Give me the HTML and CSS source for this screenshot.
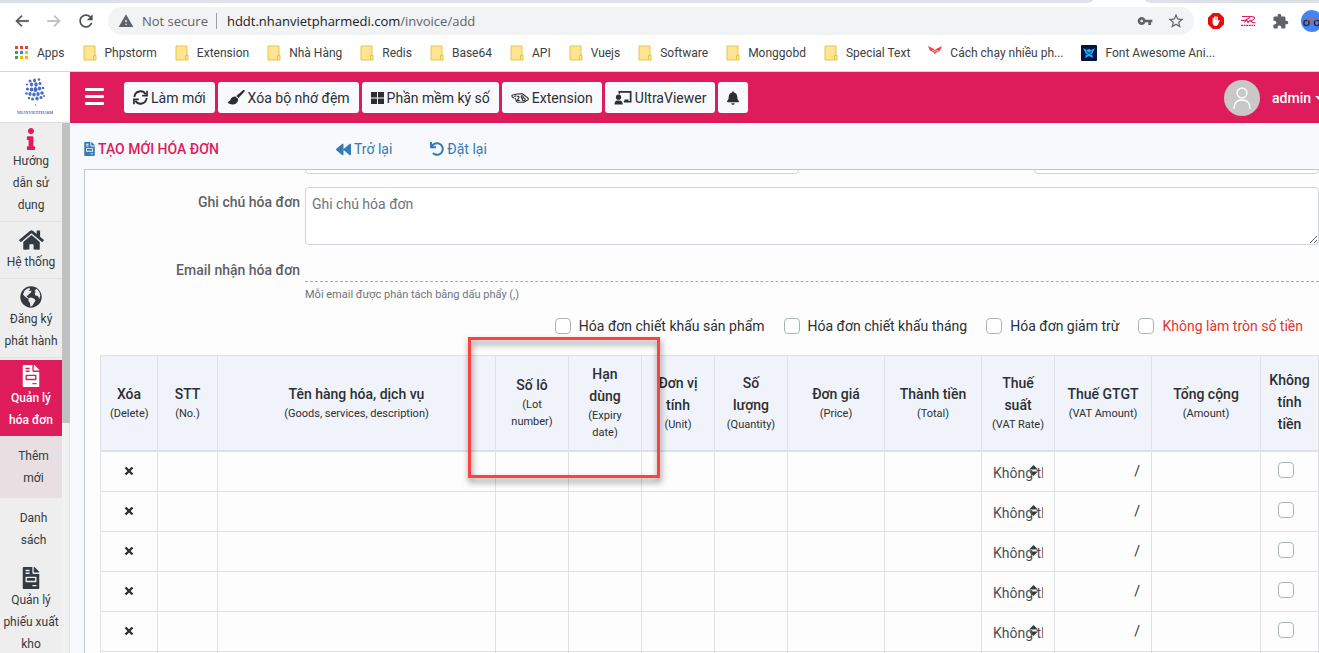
FILE: index.html
```html
<!DOCTYPE html>
<html lang="vi">
<head>
<meta charset="utf-8">
<title>Tạo mới hóa đơn</title>
<link rel="stylesheet" href="styles.css">
</head>
<body>
<svg class="sprite" aria-hidden="true">
  <symbol id="i-back" viewBox="0 0 24 24"><path d="M22 11H6.200l6.200-6.200L11 3.400 2.400 12 11 20.600l1.400-1.400L6.200 13H22z" stroke="currentColor" stroke-width=".6"/></symbol>
  <symbol id="i-folder" viewBox="0 0 14 16"><path d="M1 1h11v9h1v5H1z" fill="#ffe591" stroke="#e8c34a" stroke-width="1"/><path d="M10.500 14.500v-4h2" fill="none" stroke="#e8c34a"/></symbol>
  <symbol id="i-invoice" viewBox="0 0 384 512"><path d="M288 256H96v64h192v-64zm89-151L279.100 7c-4.500-4.500-10.600-7-17-7H256v128h128v-6.100c0-6.300-2.500-12.400-7-16.900zm-153 31V0H24C10.700 0 0 10.700 0 24v464c0 13.300 10.700 24 24 24h336c13.300 0 24-10.700 24-24V160H248c-13.200 0-24-10.800-24-24zM64 72c0-4.420 3.580-8 8-8h80c4.420 0 8 3.580 8 8v16c0 4.420-3.580 8-8 8H72c-4.420 0-8-3.580-8-8V72zm0 64c0-4.420 3.580-8 8-8h80c4.420 0 8 3.580 8 8v16c0 4.420-3.580 8-8 8H72c-4.420 0-8-3.580-8-8v-16zm256 304c0 4.420-3.580 8-8 8h-80c-4.420 0-8-3.580-8-8v-16c0-4.420 3.580-8 8-8h80c4.420 0 8 3.580 8 8v16zm0-200v96c0 8.840-7.160 16-16 16H80c-8.840 0-16-7.160-16-16v-96c0-8.840 7.160-16 16-16h224c8.840 0 16 7.160 16 16z"/></symbol>
  <symbol id="i-times" viewBox="0 0 10 10"><path d="M1.500 1.500l7 7M8.500 1.500l-7 7" stroke="currentColor" stroke-width="2.400"/></symbol>
</svg>

<div class="browser">
  <div class="tabstrip"><span class="tabs-left"></span><span class="tabs-right"></span></div>
  <div class="toolbar">
    <button class="nav-btn" aria-label="Back"><svg width="16" height="18"><use href="#i-back"/></svg></button>
    <button class="nav-btn nav-btn-off nav-btn-forward" aria-label="Forward"><svg width="16" height="18"><use href="#i-back"/></svg></button>
    <button class="nav-btn" aria-label="Reload"><svg width="20" height="20" viewBox="0 0 24 24"><path d="M17.650 6.350C16.200 4.900 14.210 4 12 4c-4.420 0-7.990 3.580-7.990 8s3.570 8 7.990 8c3.730 0 6.840-2.550 7.730-6h-2.080c-.82 2.330-3.040 4-5.650 4-3.310 0-6-2.690-6-6s2.690-6 6-6c1.660 0 3.140.69 4.220 1.780L13 11h7V4l-2.350 2.350z"/></svg></button>
    <div class="omnibox">
      <svg width="16" height="16" viewBox="0 0 24 24"><path d="M1 21h22L12 2 1 21zm12-3h-2v-2h2v2zm0-4h-2v-4h2v4z"/></svg>
      <span class="secure">Not secure</span>
      <span class="url"><b>hddt.nhanvietpharmedi.com</b>/invoice/add</span>
      <svg width="16" height="16" viewBox="0 0 24 24"><path d="M12.650 10C11.830 7.670 9.610 6 7 6c-3.310 0-6 2.690-6 6s2.690 6 6 6c2.610 0 4.830-1.670 5.650-4H17v4h4v-4h2v-4H12.650zM7 14c-1.100 0-2-.9-2-2s.9-2 2-2 2 .9 2 2-.9 2-2 2z"/></svg>
      <svg width="18" height="18" viewBox="0 0 24 24"><path d="M22 9.240l-7.190-.62L12 2 9.190 8.630 2 9.240l5.460 4.730L5.820 21 12 17.270 18.180 21l-1.630-7.030L22 9.240zM12 15.400l-3.760 2.270 1-4.280-3.320-2.880 4.380-.38L12 6.100l1.710 4.040 4.380.38-3.320 2.880 1 4.280L12 15.400z"/></svg>
    </div>
    <div class="extensions">
      <svg width="16" height="16" viewBox="0 0 16 16"><path d="M4.800 0h6.400L16 4.800v6.400L11.200 16H4.800L0 11.200V4.800z" fill="#e40d0d"/><path d="M4.600 8.400V5.200q.5-.8 1 0v2h.3V4q.6-.8 1.100 0v3h.3V3.400q.6-.8 1.100 0V7h.3V4q.6-.8 1.100 0v4.200l1-1.200q1-.4.900.5l-1.700 3.900Q9 13 7.300 12.900 4.600 12.600 4.600 9.500z" fill="#fff"/></svg>
      <svg width="16" height="16" viewBox="0 0 16 16" fill="none" stroke="#d81e5b"><path d="M2 3.500h9q4 0 3.500 1.800T8 8.500M1 7.500h4L10 4.500M4.500 9.500l2-3L8 9.500l2-2 3 2.300h2.500" stroke-width="1.100"/><path d="M1 12.300h14" stroke-width="1.200" stroke-dasharray="2 .6"/></svg>
      <svg width="17" height="17" viewBox="0 0 24 24"><path d="M20.500 11H19V7c0-1.100-.9-2-2-2h-4V3.500C13 2.120 11.880 1 10.500 1S8 2.120 8 3.500V5H4c-1.100 0-1.990.9-1.990 2v3.800H3.500c1.490 0 2.700 1.210 2.700 2.700s-1.210 2.700-2.700 2.700H2V20c0 1.100.9 2 2 2h3.800v-1.500c0-1.490 1.210-2.700 2.700-2.700 1.490 0 2.700 1.210 2.700 2.700V22H17c1.100 0 2-.9 2-2v-4h1.500c1.380 0 2.500-1.120 2.500-2.500S21.880 11 20.500 11z"/></svg>
      <svg width="22" height="22" viewBox="0 0 22 22"><circle cx="11" cy="11" r="11" fill="#4285f4"/><g fill="none" stroke="#202a44" stroke-width="1.400"><circle cx="5.500" cy="13" r="2.600"/><circle cx="16" cy="13" r="2.600"/></g><path d="M5.500 13l2.500-5h6l2 5M8.500 8.500l2 4.500 3.500-4.500M6.500 7.500h2.500" fill="none" stroke="#e0553c"/></svg>
    </div>
  </div>
  <nav class="bookmarks">
    <a href="#"><svg width="14" height="14" viewBox="0 0 14 14"><g fill="#ea4335"><path d="M0 0h3v3H0zM5 0h3v3H5zM10 0h3v3h-3z"/></g><path d="M0 5h3v3H0zM0 10h3v3H0z" fill="#34a853"/><path d="M5 5h3v3H5z" fill="#1a8cff"/><path d="M10 5h3v3h-3zM5 10h3v3H5zM10 10h3v3h-3z" fill="#fbb400"/></svg>Apps</a>
    <a href="#"><svg width="14" height="16"><use href="#i-folder"/></svg>Phpstorm</a>
    <a href="#"><svg width="14" height="16"><use href="#i-folder"/></svg>Extension</a>
    <a href="#"><svg width="14" height="16"><use href="#i-folder"/></svg>Nhà Hàng</a>
    <a href="#"><svg width="14" height="16"><use href="#i-folder"/></svg>Redis</a>
    <a href="#"><svg width="14" height="16"><use href="#i-folder"/></svg>Base64</a>
    <a href="#"><svg width="14" height="16"><use href="#i-folder"/></svg>API</a>
    <a href="#"><svg width="14" height="16"><use href="#i-folder"/></svg>Vuejs</a>
    <a href="#"><svg width="14" height="16"><use href="#i-folder"/></svg>Software</a>
    <a href="#"><svg width="14" height="16"><use href="#i-folder"/></svg>Monggobd</a>
    <a href="#"><svg width="14" height="16"><use href="#i-folder"/></svg>Special Text</a>
    <a href="#"><svg width="14" height="16" viewBox="0 0 14 16"><path d="M0 1l5 2.500L7 5l2-1.500L14 1l-2 4.500L9 7 7 9 5 7 2 5.500z" fill="#ee3b3b"/><path d="M4 5l3 1.500L10 5" fill="none" stroke="#fff" stroke-width=".7"/></svg>Cách chạy nhiều ph...</a>
    <a href="#"><svg width="16" height="16" viewBox="0 0 16 16"><rect width="16" height="16" rx="1" fill="#041440"/><path d="M2 3l4 2q2-2 4 0l4-2-2 4-1 2 1 4-4-2-4 2 1-4-1-2z" fill="#20aef5"/><path d="M5 6l6 4M11 6l-6 4" stroke="#0b4fa5"/></svg>Font Awesome Ani...</a>
  </nav>
</div>

<div class="app">
  <aside class="sidebar">
    <a class="logo" href="#" aria-label="Nhan Viet Pharmedi">
      <svg width="36" height="38" viewBox="0 0 36 38"><circle cx="13" cy="4" r="1.500"/><ellipse cx="17.500" cy="3.500" rx="1.500" ry="2"/><circle cx="22" cy="2.500" r="1.300"/><circle cx="10" cy="7.500" r="1.100"/><ellipse cx="14.500" cy="7.500" rx="1.700" ry="2"/><ellipse cx="19" cy="7.500" rx="1.700" ry="2.200"/><circle cx="23" cy="6.500" r="1.600"/><circle cx="10.500" cy="12" r="1.600"/><ellipse cx="14.500" cy="12.500" rx="1.800" ry="2"/><ellipse cx="18.500" cy="12.500" rx="2" ry="2.500"/><ellipse cx="22.500" cy="11.500" rx="1.700" ry="2"/><circle cx="26" cy="11" r="1.300"/><circle cx="9.500" cy="16.500" r="1.300"/><ellipse cx="13" cy="17" rx="1.600" ry="2"/><ellipse cx="17" cy="17.500" rx="1.700" ry="2"/><ellipse cx="21" cy="17" rx="1.700" ry="2"/><circle cx="25" cy="16" r="1.800"/><circle cx="12" cy="21" r="1.200"/><circle cx="15.500" cy="22" r="1.500"/><ellipse cx="20" cy="21.500" rx="1.600" ry="1.900"/><circle cx="24" cy="20.500" r="1.600"/><circle cx="27" cy="19" r="1"/><circle cx="18.500" cy="28" r=".7"/><text x="18" y="37" text-anchor="middle" class="logo-text">NHANVIETPHARM</text></svg>
    </a>
    <div class="side-scroll">
      <nav class="menu">
        <a class="item item-first" href="#"><svg class="pink" width="10" height="22" viewBox="0 0 192 512"><path d="M20 424.229h20V279.771H20c-11.046 0-20-8.954-20-20V212c0-11.046 8.954-20 20-20h112c11.046 0 20 8.954 20 20v212.229h20c11.046 0 20 8.954 20 20V492c0 11.046-8.954 20-20 20H20c-11.046 0-20-8.954-20-20v-47.771c0-11.046 8.954-20 20-20zM96 0C56.235 0 24 32.235 24 72s32.235 72 72 72 72-32.235 72-72S135.764 0 96 0z"/></svg><span>Hướng dẫn sử dụng</span></a>
        <a class="item" href="#"><svg width="25" height="22" viewBox="0 0 576 512"><path d="M280.370 148.260L96 300.110V464a16 16 0 0 0 16 16l112.060-.29a16 16 0 0 0 15.920-16V368a16 16 0 0 1 16-16h64a16 16 0 0 1 16 16v95.640a16 16 0 0 0 16 16.050L464 480a16 16 0 0 0 16-16V300L295.670 148.260a12.190 12.190 0 0 0-15.300 0zM571.600 251.470L488 182.560V44.050a12 12 0 0 0-12-12h-56a12 12 0 0 0-12 12v72.610L318.470 43a48 48 0 0 0-61 0L4.340 251.470a12 12 0 0 0-1.600 16.900l25.500 31A12 12 0 0 0 45.150 301l235.220-193.740a12.190 12.190 0 0 1 15.300 0L530.900 301a12 12 0 0 0 16.900-1.600l25.500-31a12 12 0 0 0-1.700-16.930z"/></svg><span>Hệ thống</span></a>
        <a class="item" href="#"><svg width="22" height="22" viewBox="0 0 22 22"><circle cx="11" cy="11" r="10.700"/><path d="M4.500 4.700Q7 2 9.500 2l.5 1.500-1.500 1 1.500.5 1.500-.5-.5 2-2 1.500-1 1.500-1.500.2.500 1.300 1.500 1-1 .5-2-1.500L3 8.500zM8.500 12l3-.5 3 1.500 1 1.500-1.500 2.500-2 3.200-1.500.3-.5-3.500-1.500-2zM14.500 5l2-2.200q3.500 2.500 3.800 7l-1 3.200-1.300-3-2.500-.5L14.500 7l1.500-1z" fill="#eee"/></svg><span>Đăng ký phát hành</span></a>
        <a class="item item-active" href="#"><svg width="18" height="22"><use href="#i-invoice"/></svg><span>Quản lý hóa đơn</span></a>
        <a class="sub sub-active" href="#">Thêm mới</a>
        <a class="sub" href="#">Danh sách</a>
        <a class="item" href="#"><svg width="18" height="22"><use href="#i-invoice"/></svg><span>Quản lý phiếu xuất kho</span></a>
      </nav>
      <div class="scrollbar"><div class="thumb"></div></div>
    </div>
  </aside>

  <main class="main">
    <header class="topbar">
      <button class="burger" aria-label="Menu"><i></i><i></i><i></i></button>
      <div class="actions">
        <button class="btn"><svg width="15" height="15" viewBox="0 0 16 16" fill="none" stroke="currentColor" stroke-width="2"><path d="M1.500 7.500A6.500 6.500 0 0 1 13.500 4.500M14.500 8.500A6.500 6.500 0 0 1 2.500 11.500"/><path d="M15 .8V6H9.800M1 15.200V10h5.200" stroke-width="1.800"/></svg>Làm mới</button>
        <button class="btn"><svg width="18" height="15" viewBox="0 0 18 15"><path d="M17.500.3q.6.600 0 1.200L11.500 8 9.300 6 16 .2q.8-.5 1.500.1zM8.500 6.500l2.600 2.400q.2 4-3.600 5.300Q4 15.500.5 12.800q1-.3 1.500-1L.8 11.500 3 10.800Q4 6.500 8.500 6.500z"/></svg>Xóa bộ nhớ đệm</button>
        <button class="btn"><svg width="13" height="12" viewBox="0 0 13 12"><path d="M0 0h6v5.500H0zM7 0h6v5.500H7zM0 6.500h6V12H0zM7 6.500h6V12H7z"/></svg>Phần mềm ký số</button>
        <button class="btn"><svg width="18" height="12" viewBox="0 0 18 12" fill="none" stroke="currentColor" stroke-width="1.100"><path d="M.8 3.200L6 2l5.500-.3 5.700 4.600v1.400L13 10.300H6.500L5 9M.8 3.200l.5 2L3 6"/><path d="M3 4.500l2.500-.7M4 6l1.500 3M6 4.500q2-.8 2 .6L6.500 8.500h2.300M10 4l2 5M10 4q3-.8 2 2 2.500-.5 2 2.500l-2 .5"/></svg>Extension</button>
        <button class="btn"><svg width="18" height="14" viewBox="0 0 17 14"><circle cx="4" cy="6.200" r="2.600"/><path d="M0 13.500q0-3.800 3-4h2q3 .2 3.300 4zM4 0h13v11.500H9.500L9 10h1V8.500h4V10h1.300V1.700H5.500V3L4 2.500z"/></svg>UltraViewer</button>
        <button class="btn" aria-label="Thông báo"><svg width="12" height="14" viewBox="0 0 448 512"><path d="M224 512c35.320 0 63.970-28.650 63.970-64H160.030c0 35.350 28.650 64 63.970 64zm215.390-149.710c-19.320-20.760-55.470-51.990-55.470-154.290 0-77.700-54.480-139.900-127.940-155.160V32c0-17.670-14.320-32-31.980-32s-31.980 14.330-31.980 32v20.840C118.560 68.100 64.080 130.300 64.080 208c0 102.300-36.150 133.530-55.470 154.290-6 6.450-8.660 14.160-8.610 21.710.11 16.400 12.980 32 32.100 32h383.800c19.120 0 32-15.600 32.100-32 .05-7.550-2.610-15.270-8.610-21.710z"/></svg></button>
      </div>
      <a class="user" href="#"><svg width="36" height="36" viewBox="0 0 36 36" fill="none" stroke="#fff" stroke-width="1.300"><circle cx="18" cy="18" r="18" fill="#c8c8c8" stroke="none"/><circle cx="18" cy="13" r="5"/><path d="M10 29q0-9 8-9t8 9"/></svg><span>admin</span><i class="caret"></i></a>
    </header>

    <div class="titlebar">
      <h1><svg width="11" height="14"><use href="#i-invoice"/></svg>TẠO MỚI HÓA ĐƠN</h1>
      <a href="#"><svg width="15" height="15" viewBox="0 0 512 512"><path d="M11.500 280.600l192 160c20.600 17.200 52.500 2.800 52.500-24.600V96c0-27.400-31.900-41.800-52.500-24.600l-192 160c-15.300 12.800-15.300 36.400 0 49.200zm256 0l192 160c20.600 17.200 52.500 2.800 52.500-24.600V96c0-27.400-31.900-41.800-52.500-24.600l-192 160c-15.300 12.800-15.300 36.400 0 49.200z"/></svg>Trở lại</a>
      <a href="#"><svg width="14" height="14" viewBox="0 0 512 512"><path d="M212.333 224.333H12c-6.627 0-12-5.373-12-12V12C0 5.373 5.373 0 12 0h48c6.627 0 12 5.373 12 12v78.112C117.773 39.279 184.260 7.470 258.175 8.007c136.906.994 246.448 111.623 246.157 248.532C504.041 393.258 393.120 504 256.333 504c-64.089 0-122.496-24.313-166.510-64.215-5.099-4.622-5.334-12.554-.467-17.420l33.967-33.967c4.474-4.474 11.662-4.717 16.401-.525C170.760 415.336 211.580 432 256.333 432c97.268 0 176-78.716 176-176 0-97.267-78.716-176-176-176-58.496 0-110.280 28.476-142.274 72.333h98.274c6.627 0 12 5.373 12 12v48c0 6.627-5.373 12-12 12z"/></svg>Đặt lại</a>
    </div>

    <section class="content">
      <form class="form">
        <div class="cut-row"><input class="cut" type="text" aria-label="Địa chỉ"><input class="cut" type="text" aria-label="Hình thức"></div>
        <div class="field"><label for="note">Ghi chú hóa đơn</label><textarea id="note" placeholder="Ghi chú hóa đơn"></textarea></div>
        <div class="field"><label for="email">Email nhận hóa đơn</label><div><input id="email" class="dashed" type="text"><small>Mỗi email được phân tách bằng dấu phẩy (,)</small></div></div>
        <div class="checks">
          <label><input type="checkbox">Hóa đơn chiết khấu sản phẩm</label>
          <label><input type="checkbox">Hóa đơn chiết khấu tháng</label>
          <label><input type="checkbox">Hóa đơn giảm trừ</label>
          <label class="danger"><input type="checkbox">Không làm tròn số tiền</label>
        </div>
        <table class="grid">
          <colgroup><col class="c-del"><col class="c-no"><col><col class="c-s"><col class="c-s"><col class="c-s"><col class="c-s"><col class="c-m"><col class="c-m"><col class="c-s"><col class="c-m"><col class="c-l"><col class="c-del"></colgroup>
          <thead><tr>
            <th>Xóa<small>(Delete)</small></th><th>STT<small>(No.)</small></th><th>Tên hàng hóa, dịch vụ<small>(Goods, services, description)</small></th><th>Số lô<small>(Lot number)</small></th><th>Hạn dùng<small>(Expiry date)</small></th><th>Đơn vị tính<small>(Unit)</small></th><th>Số lượng<small>(Quantity)</small></th><th>Đơn giá<small>(Price)</small></th><th>Thành tiền<small>(Total)</small></th><th>Thuế suất<small>(VAT Rate)</small></th><th>Thuế GTGT<small>(VAT Amount)</small></th><th>Tổng cộng<small>(Amount)</small></th><th>Không tính tiền</th>
          </tr></thead>
          <tbody>
            <tr><td><button type="button" class="del" aria-label="Xóa"><svg width="10" height="10"><use href="#i-times"/></svg></button></td><td></td><td></td><td></td><td></td><td></td><td></td><td></td><td></td><td><select aria-label="Thuế suất"><option>Không thuế</option></select></td><td class="num">/</td><td></td><td class="tick"><input type="checkbox" aria-label="Không tính tiền"></td></tr>
            <tr><td><button type="button" class="del" aria-label="Xóa"><svg width="10" height="10"><use href="#i-times"/></svg></button></td><td></td><td></td><td></td><td></td><td></td><td></td><td></td><td></td><td><select aria-label="Thuế suất"><option>Không thuế</option></select></td><td class="num">/</td><td></td><td class="tick"><input type="checkbox" aria-label="Không tính tiền"></td></tr>
            <tr><td><button type="button" class="del" aria-label="Xóa"><svg width="10" height="10"><use href="#i-times"/></svg></button></td><td></td><td></td><td></td><td></td><td></td><td></td><td></td><td></td><td><select aria-label="Thuế suất"><option>Không thuế</option></select></td><td class="num">/</td><td></td><td class="tick"><input type="checkbox" aria-label="Không tính tiền"></td></tr>
            <tr><td><button type="button" class="del" aria-label="Xóa"><svg width="10" height="10"><use href="#i-times"/></svg></button></td><td></td><td></td><td></td><td></td><td></td><td></td><td></td><td></td><td><select aria-label="Thuế suất"><option>Không thuế</option></select></td><td class="num">/</td><td></td><td class="tick"><input type="checkbox" aria-label="Không tính tiền"></td></tr>
            <tr><td><button type="button" class="del" aria-label="Xóa"><svg width="10" height="10"><use href="#i-times"/></svg></button></td><td></td><td></td><td></td><td></td><td></td><td></td><td></td><td></td><td><select aria-label="Thuế suất"><option>Không thuế</option></select></td><td class="num">/</td><td></td><td class="tick"><input type="checkbox" aria-label="Không tính tiền"></td></tr>
            <tr><td></td><td></td><td></td><td></td><td></td><td></td><td></td><td></td><td></td><td></td><td></td><td></td><td></td></tr>
          </tbody>
        </table>
      </form>
    </section>
  </main>
</div>
<div class="highlight"></div>
</body>
</html>
```

FILE: styles.css
```css
* { box-sizing: border-box; }
html, body { height: 100%; }
body {
  margin: 0;
  display: flex;
  flex-direction: column;
  overflow: hidden;
  position: relative;
  font: 14px/22px Roboto, "Liberation Sans", sans-serif;
  color: #2b2f33;
  background: #fff;
}
a { color: inherit; text-decoration: none; }
button, input, select, textarea { font: inherit; color: inherit; margin: 0; }
button { border: 0; padding: 0; background: none; }
svg { display: block; flex: none; fill: currentColor; }
svg[fill="none"] { fill: none; }
.sprite { position: absolute; width: 0; height: 0; }

/* Browser bars */
.browser {
  flex: none;
  font-family: "Open Sans", "Noto Sans", sans-serif;
  border-bottom: 1px solid #d5d7da;
  color: #5f6368;
}
.tabstrip { display: flex; justify-content: space-between; gap: 52px; height: 3px; }
.tabs-left { flex: 1; background: #dee1e6; border-bottom-right-radius: 8px 3px; }
.tabs-right { width: 174px; background: #dee1e6; border-bottom-left-radius: 8px 3px; }
.toolbar { display: flex; align-items: center; height: 36px; padding-left: 14px; }
.nav-btn { display: flex; justify-content: center; width: 16px; margin-right: 16px; color: #4b4f54; }
.nav-btn-off { color: #b9bbbe; }
.nav-btn-forward svg { transform: scaleX(-1); }
.omnibox {
  flex: 1;
  display: flex;
  align-items: center;
  height: 28px;
  margin-left: -2px;
  padding: 0 9px 0 10px;
  border-radius: 14px;
  background: #f1f3f4;
  font-size: 13px;
}
.secure { padding: 0 8px; border-right: 1px solid #9aa0a6; line-height: 16px; }
.url { flex: 1; padding-left: 10px; }
.url b { font-weight: 400; color: #202124; }
.omnibox svg + svg { margin-left: 14px; }
.extensions { display: flex; align-items: center; gap: 16px; margin: 0 -4px 0 14px; }
.extensions svg:last-child { margin-left: -4px; }
.bookmarks {
  display: flex;
  align-items: center;
  gap: 18px;
  height: 32px;
  padding: 0 0 4px 15px;
  font-family: Roboto, sans-serif;
  font-size: 12px;
  color: #3c4043;
  white-space: nowrap;
}
.bookmarks a { display: flex; align-items: center; gap: 8px; }

/* App shell */
.app { flex: 1; display: flex; min-height: 0; background: #f8f9fc; }
.sidebar { flex: none; display: flex; flex-direction: column; width: 70px; background: #eee; }
.logo { flex: none; display: flex; justify-content: center; height: 50px; padding-top: 5px; background: #fff; color: #4a6bc8; }
.logo-text { font: bold 4px "Liberation Serif", serif; }
.side-scroll { flex: 1; display: flex; min-height: 0; overflow: hidden; border-top: 1px solid #ddd; }
.menu { flex: 1; min-width: 0; font-size: 12px; text-align: center; color: #343a40; }
.scrollbar { flex: none; width: 8px; background: #f1f1f1; border-right: 1px solid #e0e0e0; }
.thumb { height: 300px; margin-right: -1px; background: #c1c1c1; }
.item { display: flex; flex-direction: column; align-items: center; padding: 7px 1px 5px; border-bottom: 1px solid #e2e2e2; }
.item-first { padding: 5px 10px 5px; }
.pink { color: #de1b5b; }
.item-active { margin-top: 2px; padding: 5px 6px 5px; border: 0; background: #de1b5b; color: #fff; font-weight: 500; }
.sub { display: block; padding: 9px 13px 9px 18px; }
.sub-active { background: #e8dfe2; }

.main { flex: 1; display: flex; flex-direction: column; min-width: 0; }
.topbar { flex: none; display: flex; align-items: center; height: 51px; padding-left: 15px; background: #de1b5b; }
.burger { display: flex; flex-direction: column; gap: 4px; width: 19px; margin-right: 20px; padding-bottom: 3px; }
.burger i { height: 3px; background: #fff; border-radius: 1px; }
.actions { display: flex; gap: 3px; }
.btn { display: flex; align-items: center; gap: 3px; height: 31px; padding: 0 9px; border-radius: 3px; background: #f8f9fc; white-space: nowrap; }
.user { display: flex; align-items: center; margin: 0 -4px 0 auto; color: #fff; font-weight: 500; }
.user span { margin: 0 4px 0 12px; }
.caret { border: 4px solid transparent; border-top-color: #fff; border-bottom: 0; }

.titlebar { flex: none; display: flex; align-items: center; gap: 38px; height: 46px; padding: 6px 14px 0; color: #337ab7; }
.titlebar a, .titlebar h1 { display: flex; align-items: center; gap: 3px; }
.titlebar h1 { width: 214px; margin: 0; font-size: 14px; font-weight: 500; color: #de1b5b; }
.titlebar h1 svg { color: #337ab7; }

.content { flex: 1; min-height: 0; margin-left: 14px; overflow: hidden; border: 1px solid #c3c6ca; border-width: 1px 0 0 1px; background: #fdfdfe; }
.form { display: flex; flex-direction: column; }
.cut-row { display: flex; justify-content: space-between; margin: -28px 0 13px 220px; }
.cut { width: 494px; height: 32px; border: 1px solid #ced4da; border-radius: 4px; background: #fff; }
.cut + .cut { width: 285px; }
.field { display: grid; grid-template-columns: 215px 1fr; gap: 5px; margin-bottom: 13px; }
.field label { padding-top: 4px; text-align: right; font-weight: 500; color: #5f6164; }
.field + .field label { padding-top: 1px; }
.field textarea { display: block; width: 100%; height: 58px; padding: 5px 6px; border: 1px solid #ced4da; border-radius: 4px; background: #fff; }
.field textarea::placeholder { color: #6c757d; }
.dashed { display: block; width: 100%; height: 24px; border: 0; border-bottom: 1px dashed #a9abae; background: none; }
.field small { display: block; padding-top: 4px; font-size: 11px; line-height: 17px; color: #6c757d; }
.checks { display: flex; justify-content: flex-end; gap: 19px; margin-top: -1px; padding: 0 16px 18px; }
.checks label { display: flex; align-items: center; gap: 8px; }
.danger { color: #e3342f; }
input[type="checkbox"] { appearance: none; display: block; width: 16px; height: 16px; border: 1px solid #adb5bd; border-radius: 4px; background: #fff; }

.grid { width: calc(100% - 15px); margin-left: 15px; table-layout: fixed; border-collapse: collapse; }
.c-del { width: 57px; }
.c-no { width: 60px; }
.c-s { width: 73px; }
.c-m { width: 97px; }
.c-l { width: 109px; }
.grid col:last-child { width: 58px; }
.grid th, .grid td { border: 1px solid #dee2e6; }
.grid th { padding: 7px 9px 9px; border-bottom-width: 2px; background: #f0f3f9; font-weight: 500; }
.grid th:last-child { padding: 7px 4px 9px; }
.grid th small { display: block; font-size: 11px; line-height: 17px; font-weight: 400; }
.grid td { height: 40px; padding: 0; }
.grid td input { margin: 0 auto; }
.grid .num { padding-right: 11px; text-align: right; }
.grid .tick { padding: 0 8px 2px 0; }
.del { display: block; margin: 0 auto; }
select {
  appearance: none;
  display: block;
  width: 62px;
  height: 30px;
  margin: 4px 0 0 5px;
  padding: 0 6px;
  border: 0;
  color: #495057;
  background: url("data:image/svg+xml,%3Csvg xmlns='http://www.w3.org/2000/svg' viewBox='0 0 4 5'%3E%3Cpath fill='%23343a40' d='M2 0L0 2h4zm0 5L0 3h4z'/%3E%3C/svg%3E") no-repeat 42px 7px / 9px 11px;
}

/* Marker drawn over the table */
.highlight {
  position: absolute;
  left: 468px;
  top: 337px;
  width: 192px;
  height: 141px;
  border: 3px solid #fc4343;
  filter: drop-shadow(1px 4px 3px rgba(0, 0, 0, 0.5));
  pointer-events: none;
}
```
